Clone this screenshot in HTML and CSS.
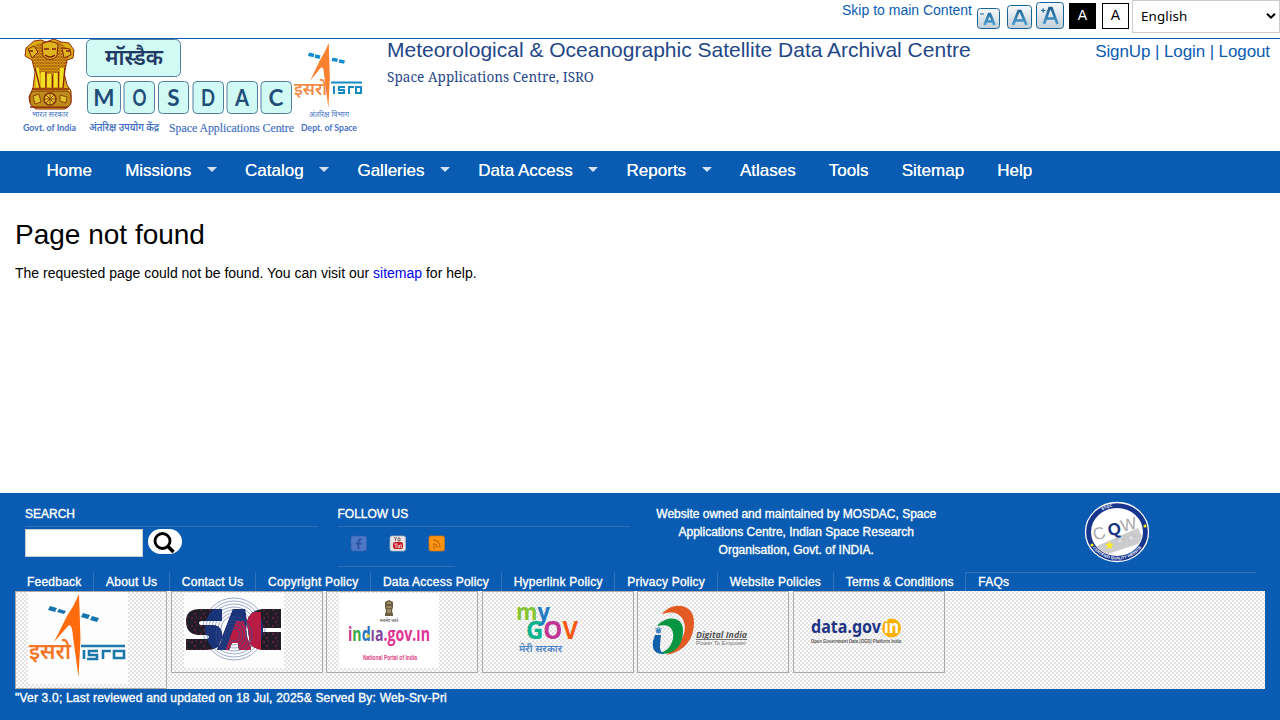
FILE: index.html
```html
<!DOCTYPE html>
<html lang="en">
<head>
<meta charset="utf-8">
<title>Page not found | Meteorological &amp; Oceanographic Satellite Data Archival Centre</title>
<link rel="stylesheet" href="styles.css">
</head>
<body>
<div class="topbar">
  <a class="skip" href="#main">Skip to main Content</a>
  <svg class="tools" width="96" height="32" viewBox="0 0 96 32">
    <defs><linearGradient id="btn" x2="0" y2="1"><stop stop-color="#f8fafc"/><stop offset="1" stop-color="#c3d0d9"/></linearGradient><linearGradient id="let" x2="0" y2="1"><stop stop-color="#1c6092"/><stop offset="1" stop-color="#4b9fd0"/></linearGradient></defs>
    <g fill="url(#btn)" stroke="#16639a"><rect x="1.500" y="8.500" width="22" height="20" rx="3"/><rect x="31.500" y="5.500" width="24" height="23" rx="3"/><rect x="60.500" y="2.500" width="27" height="26" rx="3"/></g>
    <g fill="none" stroke="url(#let)" stroke-width="2.700"><path d="M8.500 25 13 14h1l4.500 11M10 21.500h7M37 25 42.500 11h2l6 14M39 20.500h9M68 24 73.500 8h2l6 16M70 18.500h9"/></g>
    <path d="M4 14h4M65 10.500h4.500M67.200 8.300v4.500" stroke="#1769a3" stroke-width="1.200"/>
  </svg>
  <span class="contrast dark">A</span>
  <span class="contrast">A</span>
  <div class="lang">English<svg width="12" height="8" viewBox="0 0 12 8"><path d="M2 1.700 6 5.700 10 1.700" fill="none" stroke="#000" stroke-width="2"/></svg></div>
</div>
<header class="header">
  <svg class="logo" width="345" height="100" viewBox="20 39 345 100">
    <defs>
      <path id="isro" d="M51 0Q46 12 39 22L26 48 40 32Q44 28 45 43L50.500 83 52.500 45Z"/>
      <pattern id="curls" width="3" height="3" patternUnits="userSpaceOnUse"><path d="M0 1.500 1.500 0 3 1.500 1.500 3Z" fill="none" stroke="#95320b" stroke-width=".8"/></pattern>
      <g id="lions">
        <path d="M34 41 41 40 46 42 54 39 61 42 69 43 74 50 73 58 67 60 64 73 67 85 71 91V102Q69 108 64 109H36Q29 105 29 97L33 88 35 72 32 60 25 56 26 48Z" fill="#dcb014" stroke="#942c0b"/>
        <path d="M30 48 42 42H60L70 51 66 69 56 76H42L33 65Z" fill="url(#curls)"/>
        <path d="M37 68 38 87M43 72v15M49 74v13M56 73v14M62 68l-1 19" stroke="#f4df25" stroke-width="4"/>
        <path d="M35 68 40 88M46 72v16M52.500 76v12M58.500 72v16M65 68l-2 20M32 89h37M30 107h37" stroke="#85240b" stroke-width="1.400"/>
        <path d="M42 44q8-5 16 0l-1 12q-7 7-14 0zM28 49l6-3 4 6-6 6zM62 48l8 1 1 6-7 3z" fill="#dfb51d" stroke="#842608"/>
        <path d="M44 49h5M52 49h4M45 55q5 4 10 0M29 51h4M66 51h4" stroke="#80200b" stroke-width="1.600" fill="none"/>
        <rect x="30" y="91" width="41" height="16" rx="5" fill="#be8c18" stroke="#852b0b"/>
        <circle cx="50" cy="99" r="6" fill="#e5c52b" stroke="#84330a" stroke-width="1.500"/><path d="M45 99h10M50 94v10M46 95l8 8M54 95l-8 8M33 96l6-2 2 8-6 2zM60 95l7 2-1 6-6-2z" stroke="#8e430d" fill="#e0c22a"/>
      </g>
    </defs>
    <use href="#lions"/>
    <g class="deva" fill="#4472c4">
      <text x="32" y="117" font-size="8" textLength="36" lengthAdjust="spacingAndGlyphs">भारत सरकार</text>
      <text x="89" y="131" font-size="11" font-weight="600" textLength="70" lengthAdjust="spacingAndGlyphs">अंतरिक्ष उपयोग केंद्र</text>
      <text x="309" y="117" font-size="8" textLength="40" lengthAdjust="spacingAndGlyphs">अंतरिक्ष विभाग</text>
    </g>
    <g class="small-label"><text x="23" y="130.500" textLength="53" lengthAdjust="spacingAndGlyphs">Govt. of India</text><text x="301" y="130.500" textLength="56" lengthAdjust="spacingAndGlyphs">Dept. of Space</text></g>
    <text class="centre" x="169" y="131.500" textLength="125" lengthAdjust="spacingAndGlyphs">Space Applications Centre</text>
    <g fill="#d1faf4" stroke="#527f9d"><rect x="86.500" y="39.500" width="94" height="37" rx="5"/><rect x="87.500" y="81.500" width="33" height="32" rx="4"/><rect x="124" y="81.500" width="30.500" height="32" rx="4"/><rect x="158.500" y="81.500" width="30" height="32" rx="4"/><rect x="193" y="81.500" width="30.500" height="32" rx="4"/><rect x="227" y="81.500" width="30.500" height="32" rx="4"/><rect x="261" y="81.500" width="30.500" height="32" rx="4"/></g>
    <text class="deva" x="105" y="64.500" font-size="22" font-weight="600" fill="#203864" textLength="58" lengthAdjust="spacingAndGlyphs">मॉस्डैक</text>
    <g class="tile"><text x="104" y="106">M</text><text x="139.500" y="106" textLength="14" lengthAdjust="spacingAndGlyphs">O</text><text x="173.500" y="106">S</text><text x="208" y="106" textLength="14" lengthAdjust="spacingAndGlyphs">D</text><text x="242" y="106" textLength="14" lengthAdjust="spacingAndGlyphs">A</text><text x="276" y="106">C</text></g>
    <g transform="translate(291 43) scale(.74 .78)" fill="#fa812f"><use href="#isro"/></g>
    <path d="m309 52.500 5.500 1.200-1 3.500-5.500-1.200zm6.500 1.700 5 1.200-1 3.500-5-1.200zm17 3.300 5.500 1.200-1 3.300-5.500-1.200zm7 1.700 5.500 1.200-1 3.300-5.500-1.200z" fill="#118ccc"/>
    <text class="deva" x="294" y="94.500" font-size="18" font-weight="600" fill="#f28b45" textLength="33" lengthAdjust="spacingAndGlyphs">इसरो</text>
    <path d="M331 82.500h31M334 86v8M345 87h-6v3h5v3h-6M349 94v-7h5M356 87h5v6h-5z" fill="none" stroke="#168ac5" stroke-width="2"/>
  </svg>
  <div class="title"><h1>Meteorological &amp; Oceanographic Satellite Data Archival Centre</h1><p>Space Applications Centre, ISRO</p></div>
  <div class="account"><a>SignUp</a> | <a>Login</a> | <a>Logout</a></div>
</header>
<nav class="nav"><a>Home</a><a class="drop">Missions</a><a class="drop">Catalog</a><a class="drop">Galleries</a><a class="drop">Data Access</a><a class="drop">Reports</a><a>Atlases</a><a>Tools</a><a>Sitemap</a><a>Help</a></nav>
<main class="main" id="main"><h2>Page not found</h2><p>The requested page could not be found. You can visit our <a>sitemap</a> for help.</p></main>
<footer class="footer">
  <div class="columns">
    <section><h3>SEARCH</h3><div class="search"><span class="field"></span><svg width="34" height="25" viewBox="0 0 34 25"><rect width="34" height="25" rx="12.500" fill="#fff"/><circle cx="14.500" cy="12" r="7.500" fill="none" stroke="#000" stroke-width="2.800"/><path d="m19.500 17 6 6" stroke="#000" stroke-width="3.500"/></svg></div></section>
    <section><h3>FOLLOW US</h3><div class="social"><svg width="117" height="39" viewBox="0 0 117 39">
      <g stroke-width=".7"><rect x="13" y="9" width="15.500" height="15" rx="2" fill="#4d78c7" stroke="#315ea9"/><rect x="52" y="9" width="15.500" height="15" rx="2" fill="#e7e5e4" stroke="#b9b9bb"/><rect x="91" y="9" width="15.500" height="15" rx="2" fill="#ff9410" stroke="#d9770c"/></g>
      <path d="M24 12.500q-3.500-1-3.500 2.500v7M18 16.500h5.500" fill="none" stroke="#29529b" stroke-width="1.800"/>
      <rect x="55" y="15" width="10" height="7" rx="2" fill="#c51e2c"/><path d="m56 10 1.500 2v2M57.500 12l1-2M60 11v3h2v-3z" fill="none" stroke="#68484d" stroke-width=".8"/><path d="M56.500 17h3M58 17v4M60 18v2.500h1.500v-2.500M63 17v3.500h1" fill="none" stroke="#fff" stroke-width=".7"/>
      <path d="M95 13q7 0 7 8M95 17q4 0 4 4" fill="none" stroke="#c66f0b" stroke-width="1.500"/><circle cx="96" cy="20.500" r="1.200" fill="#c66f0b"/>
    </svg></div></section>
    <p class="owner">Website owned and maintained by MOSDAC, Space<br>Applications Centre, Indian Space Research<br>Organisation, Govt. of INDIA.</p>
    <div class="quality"><svg width="66" height="62" viewBox="0 0 66 62">
      <defs><path id="ringtop" d="M5.500 31a27 25.500 0 0 1 54 0"/><path id="ringbase" d="M3.500 31a29.500 27.500 0 0 0 59 0"/><path id="star" d="m0-4 1.200 2.800 3 .2-2.300 2 .8 3L0 2.400-2.700 4l.8-3-2.300-2 3-.2Z"/></defs>
      <ellipse cx="33" cy="31" rx="31.500" ry="29.500" fill="#17358c" stroke="#fff" stroke-width="1.300"/><ellipse cx="33" cy="31" rx="26" ry="24" fill="#fff"/>
      <path d="M13 45 54 27l4 8q-1 5-4 8l-30 10q-7-2-11-8" fill="#ccc"/>
      <use href="#star" transform="translate(25.500 44)" fill="#ffeb20"/><g fill="#ddd" stroke="#aeb4c8" stroke-width=".5"><use href="#star" transform="translate(36 39.500)"/><use href="#star" transform="translate(47 36.500)"/></g>
      <g class="cqw" fill="#aaa"><text transform="translate(17 38) rotate(-20)">C</text><text transform="translate(31.500 34) rotate(-12)" fill="#16337f" font-weight="bold">Q</text><text transform="translate(46 29) rotate(-14)">W</text></g>
      <text class="seal"><textPath href="#ringtop" startOffset="32%">STQC</textPath></text><text class="seal"><textPath href="#ringbase" startOffset="19%">CERTIFIED QUALITY WEBSITE</textPath></text>
      <circle cx="8" cy="44" r="1.500" fill="#ff0"/><circle cx="61" cy="25" r="1.500" fill="#ff0"/>
    </svg></div>
  </div>
  <div class="links"><a>Feedback</a><a>About Us</a><a>Contact Us</a><a>Copyright Policy</a><a>Data Access Policy</a><a>Hyperlink Policy</a><a>Privacy Policy</a><a>Website Policies</a><a>Terms &amp; Conditions</a><a class="last">FAQs</a></div>
  <div class="partners">
    <a class="partner tall"><svg width="150" height="96" viewBox="0 0 150 96"><rect x="12" width="100" height="92" fill="#fdfdfd"/><g transform="translate(12 2)" fill="#ff6b0d"><use href="#isro"/></g><path d="m34 14 7 2-2 4-7-2zm9 3 7 2-2 3-7-2zm24 4 7 2-2 4-7-2zm9 3 7 2-2 4-7-2z" fill="#1674ad"/><text class="deva" x="13" y="67" font-size="23" font-weight="600" fill="#f37525" textLength="42" lengthAdjust="spacingAndGlyphs">इसरो</text><path d="M65 54h44M68 58v9M82 59h-9v4h8v4H71M87 67v-8h8M98 59h10v7H98z" fill="none" stroke="#1b78ab" stroke-width="2.600"/></svg></a>
    <a class="partner"><svg width="150" height="80" viewBox="0 0 150 80">
      <defs><pattern id="speck" width="9" height="8" patternUnits="userSpaceOnUse"><rect width="9" height="8" fill="#201d29"/><path d="M1 2h2M6 1h1M4 6h2" stroke="#a2213d"/></pattern><clipPath id="sac"><path d="M50 17H28Q14 17 14 29 14 42 26 43H34Q37 43 37 45 37 47 34 47H14V58H34Q50 58 50 44 50 33 40 33H30Q27 33 27 31 27 29 30 29H50ZM61 17h12l6 41H67l-1-7h-6l-3 7H45ZM109 17H90Q74 19 74 37 74 56 90 58H109V40H91V36H109Z"/></clipPath></defs>
      <rect x="12" y="1" width="100" height="75" fill="#fdfdfd"/>
      <g fill="none" stroke="#8494c0" stroke-width=".8"><circle cx="62" cy="37" r="31"/><circle cx="62" cy="37" r="28"/><circle cx="62" cy="37" r="25"/><circle cx="62" cy="37" r="22"/><circle cx="62" cy="37" r="19"/><circle cx="62" cy="37" r="16"/><circle cx="62" cy="37" r="13"/></g>
      <g clip-path="url(#sac)"><rect x="12" y="15" width="100" height="45" fill="url(#speck)"/><circle cx="62" cy="37" r="29" fill="#173785" opacity=".85"/><path d="M53 59 64 29h8l8 30zM74 20h15v38H77z" fill="#d5183a" opacity=".85"/><g fill="none" stroke="#354f9b" stroke-width=".7"><circle cx="62" cy="43" r="6"/><circle cx="62" cy="43" r="9"/><circle cx="62" cy="43" r="12"/><circle cx="62" cy="43" r="15"/><circle cx="62" cy="43" r="18"/></g></g>
    </svg></a>
    <a class="partner"><svg width="150" height="80" viewBox="0 0 150 80"><rect x="12" y="1" width="100" height="75" fill="#fff"/><g transform="translate(57 8)"><path d="M1 2 5 0l4 2v5L8 11l1 3v2H1v-2l1-3-1-4z" fill="#6b5b40"/><path d="M3 3h4M2.500 7h5M4 9v4M6 9v4" stroke="#cfbc8d"/></g>
      <text class="deva" x="53" y="30" font-size="4.500" fill="#333" textLength="18" lengthAdjust="spacingAndGlyphs">सत्यमेव जयते</text>
      <text class="india" x="21" y="49" textLength="82" lengthAdjust="spacingAndGlyphs"><tspan fill="#c43592">i</tspan><tspan fill="#36a845">n</tspan><tspan fill="#2874be">d</tspan><tspan fill="#834ba0">ı</tspan><tspan fill="#7f459e">a</tspan><tspan fill="#df3294">.gov.ın</tspan></text><circle cx="41" cy="44" r="1.700" fill="#ffcc21"/><text x="36" y="68" font-size="8" font-weight="bold" fill="#dc3e83" textLength="54" lengthAdjust="spacingAndGlyphs">National Portal of India</text></svg></a>
    <a class="partner"><svg width="150" height="80" viewBox="0 0 150 80"><text class="my" x="33" y="28" textLength="34" lengthAdjust="spacingAndGlyphs"><tspan fill="#83c631">m</tspan><tspan fill="#237bc6">y</tspan></text><text class="my gov" x="43" y="47" textLength="52" lengthAdjust="spacingAndGlyphs"><tspan fill="#08b38e">G</tspan><tspan fill="#c33595">O</tspan><tspan fill="#f55b13">V</tspan></text><text class="deva" x="36" y="60" font-size="10" font-weight="600" fill="#4c83c7" textLength="43" lengthAdjust="spacingAndGlyphs">मेरी सरकार</text></svg></a>
    <a class="partner"><svg width="150" height="80" viewBox="0 0 150 80"><path d="M24 22C34 9 56 11 56 30 56 49 45 60 28 63 45 51 51 37 44 26 39 19 32 20 24 22Z" fill="#e35a23"/><path d="M19 34C28 23 45 24 45 38 45 54 36 64 22 61 32 59 38 46 34 38 31 32 25 33 19 34Z" fill="#079541"/><path d="M17 43h6l-1 10q-1 7 5 9-14 1-12-13z" fill="#1261a8"/><circle cx="20.500" cy="39" r="2.500" fill="#4284bd"/><path d="M17 37q4-3 7 0" fill="none" stroke="#518fc2"/><text x="58" y="46" font-size="9.500" font-style="italic" font-weight="bold" fill="#555" textLength="51" lengthAdjust="spacingAndGlyphs" font-family="Open Sans">Digital India</text><path d="M58 47.500h51" stroke="#777"/><text x="58" y="53" font-size="6" fill="#777" textLength="50" lengthAdjust="spacingAndGlyphs">Power To Empower</text></svg></a>
    <a class="partner"><svg width="150" height="80" viewBox="0 0 150 80"><text class="datagov" x="17" y="41" textLength="70" lengthAdjust="spacingAndGlyphs">data.gov</text><circle cx="97.500" cy="36" r="9.500" fill="#ffb005"/><text class="datain" x="90" y="41" textLength="15" lengthAdjust="spacingAndGlyphs">in</text><text x="17" y="50.500" font-size="4.500" font-weight="bold" fill="#555" textLength="90" lengthAdjust="spacingAndGlyphs">Open Government Data (OGD) Platform India</text></svg></a>
  </div>
  <p class="version">"Ver 3.0; Last reviewed and updated on 18 Jul, 2025&amp; Served By: Web-Srv-Pri</p>
</footer>
</body>
</html>
```
FILE: styles.css
```css
* { box-sizing: border-box; }
body, h1, h2, h3, p { margin: 0; }
body { font-family: "Liberation Sans", Arial, sans-serif; font-size: 14px; color: #000; background: #fff; overflow: hidden; }
h1, h2, h3 { font-weight: normal; }
svg { display: block; flex: none; }
.topbar { height: 39px; border-bottom: 1px solid #0a5cb3; display: flex; justify-content: flex-end; align-items: flex-start; color: #0a5cb3; }
.skip { color: #0a5cb3; line-height: 16px; margin: 2px 4px 0 0; text-decoration: none; }
.tools { margin-right: -3px; }
.contrast { width: 27px; height: 26px; margin: 3px 6px 0 0; border: 1px solid #000; text-align: center; line-height: 22px; color: #000; background: #fff; }
.contrast + .lang { margin-left: -3px; }
.dark { color: #fff; background: #000; }
.lang { width: 148px; height: 33px; border: 1px solid #ccc; padding: 0 2px 1px 8px; display: flex; align-items: center; justify-content: space-between; font: 13.33px "Noto Sans", sans-serif; letter-spacing: .15px; color: #000; }
.header { height: 112px; display: flex; align-items: flex-start; padding: 0 10px 0 20px; color: #0a5cb3; }
.logo { margin-right: 22px; }
.deva { font-family: "Noto Sans Devanagari", "Noto Sans", sans-serif; }
.small-label { font: bold 9px Lato, sans-serif; fill: #4472c4; }
.centre { font: 12px "Liberation Serif", serif; fill: #4472c4; stroke: #4472c4; stroke-width: .2px; }
.tile { font: bold 22.5px Lato, sans-serif; fill: #1f4e79; text-anchor: middle; }
.title { flex: 1; }
.title h1 { font-size: 21px; line-height: 24px; margin-top: -1px; color: #1f4788; white-space: nowrap; }
.title p { font: 13.5px/20px "Noto Serif", "DejaVu Serif", serif; letter-spacing: .06px; color: #1f4788; margin-top: 5px; }
.account { font-size: 17px; line-height: 26px; letter-spacing: -.1px; white-space: nowrap; }
.nav { height: 42px; background: #0a5cb3; display: flex; padding-left: 30px; color: #fff; font-size: 17px; line-height: 39px; }
.nav a { padding: 0 16.6px; text-shadow: 0 0 .5px #fff; white-space: nowrap; }
.nav .drop { display: flex; align-items: center; gap: 15.5px; padding-right: 11.7px; height: 39px; }
.nav .drop::after { content: ""; border: 5px solid transparent; border-top-color: #d4e1f0; border-bottom: 0; margin-top: -3px; }
.main { height: 300px; padding: 24px 15px; }
.main h2 { font-size: 28px; line-height: 36px; }
.main p { line-height: 20px; margin-top: 10px; }
.main a { color: #00e; }
.footer { height: 227px; padding: 0 15px; background: #0a5cb3; color: #fff; font-size: 12px; -webkit-text-stroke: .35px; }
.footer svg { -webkit-text-stroke: 0; }
.columns { height: 79px; display: grid; grid-template-columns: repeat(4, 312.5px); }
.columns section { padding: 10px 10px 0; }
.columns h3 { font-size: 12px; line-height: 22px; height: 24px; border-bottom: 1px solid #2c70bb; }
.search { display: flex; gap: 5px; padding-top: 2px; }
.field { width: 118px; height: 28px; background: #fff; border: 1px solid #ccc; }
.social { width: 117px; height: 40px; border-bottom: 1px solid #2c70bb; }
.owner { text-align: center; line-height: 18px; padding-top: 12px; white-space: nowrap; }
.quality { margin: 0 10px; padding: 8px 0 0 121px; }
.links { display: flex; height: 19px; line-height: 20px; white-space: nowrap; }
.links a { padding: 0 11.6px 0 12px; border-left: 1px solid #3272bd; letter-spacing: .225px; }
.links a:first-child { border-left: 0; }
.links .last { width: 291px; border-top: 1px solid #2c70bb; line-height: 18px; }
.partners { height: 98px; background-color: #fff; background-image: radial-gradient(circle, #e2e2e2 1px, transparent 1.2px), radial-gradient(circle, #e2e2e2 1px, transparent 1.2px); background-size: 4px 4px; background-position: 0 0, 2px 2px; display: flex; align-items: flex-start; gap: 3.5px; }
.partner { width: 152px; height: 82px; border: 1px solid #aaa; flex: none; }
.partner.tall { height: 98px; }
.india { font: bold 19.5px "Open Sans", sans-serif; }
.my { font: bold 23px "Open Sans", sans-serif; }
.gov { font-size: 25px; }
.datagov, .datain { font: bold 17px "Noto Sans", sans-serif; fill: #1e3485; }
.datain { fill: #fff; }
.cqw { font-size: 17px; text-anchor: middle; }
.seal { font-size: 3.8px; font-weight: bold; fill: #fff; }
.version { line-height: 18px; letter-spacing: .2px; }
```
